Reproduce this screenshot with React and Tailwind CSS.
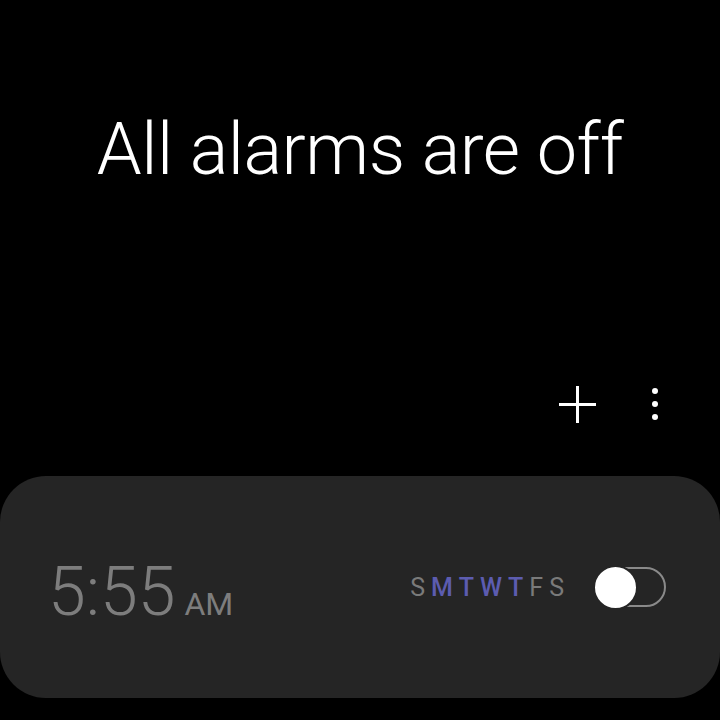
import React, { useState } from "react";

const days = [
  { d: "S", on: false },
  { d: "M", on: true },
  { d: "T", on: true },
  { d: "W", on: true },
  { d: "T", on: true },
  { d: "F", on: false },
  { d: "S", on: false },
];

export default function App() {
  const [enabled, setEnabled] = useState(false);

  return (
    <div
      className="w-[720px] h-[720px] bg-black text-white overflow-hidden flex flex-col"
      style={{ fontFamily: "Roboto, 'Noto Sans', sans-serif" }}
    >
      {/* header */}
      <div className="h-[300px] flex items-start justify-center pt-[114px]">
        <h1 className="text-[72px] font-light leading-none tracking-[-0.5px]">
          All alarms are off
        </h1>
      </div>

      {/* toolbar */}
      <div className="h-[176px] flex items-start justify-end pt-[84px] pr-[53px] gap-[46px]">
        <button className="w-[40px] h-[40px] flex items-center justify-center">
          <svg width="37" height="37" viewBox="0 0 37 37">
            <path d="M18.5 0v37M0 18.5h37" stroke="white" strokeWidth="3" />
          </svg>
        </button>
        <button className="w-[24px] h-[40px] flex flex-col items-center justify-center gap-[7px]">
          <span className="w-[6px] h-[6px] rounded-full bg-white" />
          <span className="w-[6px] h-[6px] rounded-full bg-white" />
          <span className="w-[6px] h-[6px] rounded-full bg-white" />
        </button>
      </div>

      {/* alarm card */}
      <div className="h-[222px] bg-[#252525] rounded-[46px] flex items-center justify-between pl-[52px] pr-[54px]">
        <div className="flex items-baseline gap-[9px] text-[#7d7d7d] pt-[10px] ml-[-4px]">
          <span className="text-[68px] font-light leading-none">5:55</span>
          <span className="text-[32px] leading-none">AM</span>
        </div>
        <div className="flex items-center gap-[24px]">
          <div className="flex text-[25px] tracking-[6px] leading-none">
            {days.map((x, i) => (
              <span
                key={i}
                className={x.on ? "text-[#5c5cb0] font-medium" : "text-[#7a7a7a]"}
              >
                {x.d}
              </span>
            ))}
          </div>
          <button
            onClick={() => setEnabled(!enabled)}
            className="relative w-[72px] h-[40px] rounded-full border-2 border-[#8a8a8a]"
          >
            <span className="absolute left-[-3px] top-[-4px] w-[45px] h-[45px] rounded-full bg-white border-2 border-[#252525]" />
          </button>
        </div>
      </div>
    </div>
  );
}
